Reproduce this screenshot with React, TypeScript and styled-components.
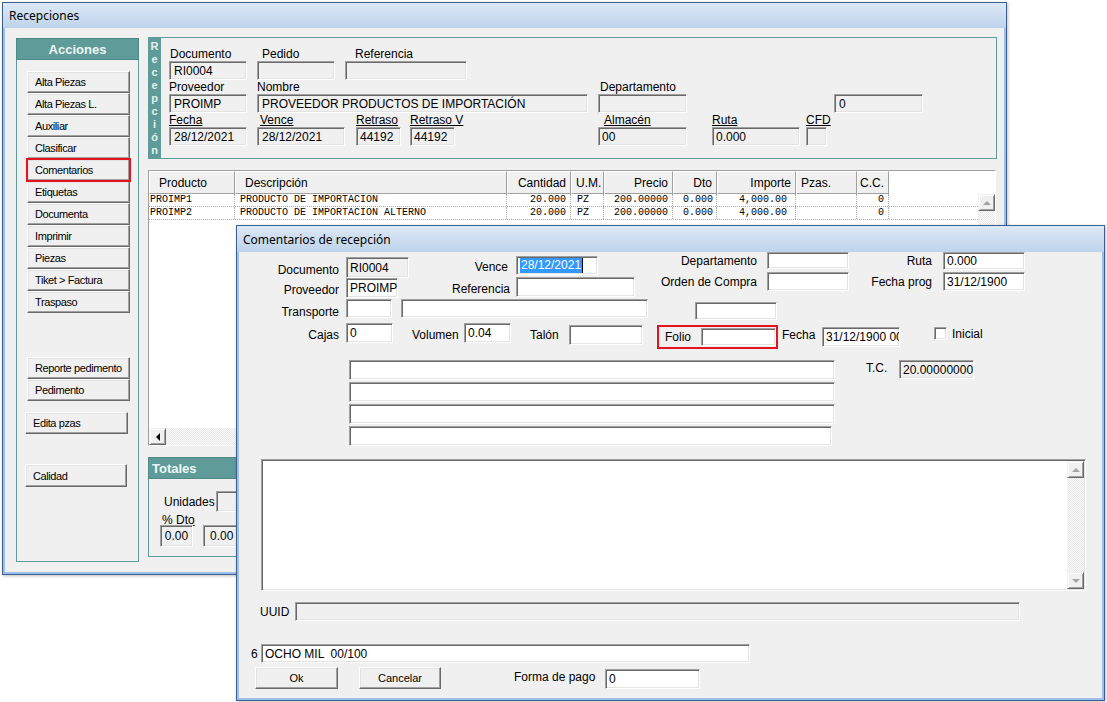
import React from 'react';
import styled, { createGlobalStyle, css } from 'styled-components';

const TEAL = '#5f9b98';

const GlobalStyle = createGlobalStyle`
  html, body {
    margin: 0;
    padding: 0;
    background: #fff;
  }
  body {
    font-family: 'Liberation Sans', Arial, sans-serif;
    font-size: 12px;
    color: #000;
  }
  * {
    box-sizing: border-box;
  }
`;

const Desktop = styled.div`
  position: relative;
  width: 1107px;
  height: 702px;
  overflow: hidden;
  background: #fff;
`;

// ventanas sobre el escritorio
const Win = styled.div<{ $x: number; $y: number; $w: number; $h: number }>`
  position: absolute;
  left: ${p => p.$x}px;
  top: ${p => p.$y}px;
  width: ${p => p.$w}px;
  height: ${p => p.$h}px;
  display: flex;
  flex-direction: column;
  border: 1px solid #3b5f8f;
  background: #9cc0e9;
  padding: 0 2px 2px 2px;
  box-shadow: 1px 1px 3px rgba(0, 0, 0, 0.25);
`;

const TitleBar = styled.div<{ $h: number }>`
  height: ${p => p.$h}px;
  margin: 0 -2px;
  flex-shrink: 0;
  display: flex;
  align-items: center;
  padding-left: 6px;
  background: linear-gradient(#dce8f5, #bed3eb);
  font-family: 'Noto Sans', 'Liberation Sans', sans-serif;
  font-size: 12px;
  color: #000;
`;

const WinBody = styled.div`
  flex: 1;
  background: #f0f0f0;
  display: flex;
  min-height: 0;
`;

const MainBody = styled(WinBody)`
  padding: 10px 0 0 11px;
  align-items: flex-start;
`;

const DialogBody = styled(WinBody)`
  flex-direction: column;
`;

/* ---------- controles comunes ---------- */

const Lbl = styled.div<{
  $w?: number;
  $right?: boolean;
  $lh?: number;
  $mt?: number;
  $ml?: number;
  $u?: boolean;
  $size?: number;
}>`
  flex-shrink: 0;
  ${p => p.$w !== undefined && css`width: ${p.$w}px;`}
  margin-left: ${p => p.$ml ?? 0}px;
  margin-top: ${p => p.$mt ?? 0}px;
  line-height: ${p => p.$lh ?? 16}px;
  text-align: ${p => (p.$right ? 'right' : 'left')};
  font-size: ${p => p.$size ?? 12}px;
  white-space: nowrap;
  text-decoration: ${p => (p.$u ? 'underline' : 'none')};
`;

const Edit = styled.div<{
  $w?: number;
  $h: number;
  $ml?: number;
  $mt?: number;
  $white?: boolean;
  $pl?: number;
  $center?: boolean;
}>`
  flex-shrink: 0;
  width: ${p => (p.$w ? `${p.$w}px` : '100%')};
  height: ${p => p.$h}px;
  margin-left: ${p => p.$ml ?? 0}px;
  margin-top: ${p => p.$mt ?? 0}px;
  padding-left: ${p => p.$pl ?? 3}px;
  background: ${p => (p.$white ? '#fff' : '#f0f0f0')};
  border: 1px solid;
  border-color: #a0a0a0 #fff #fff #a0a0a0;
  box-shadow: inset 1px 1px #696969, inset -1px -1px #e3e3e3;
  display: flex;
  align-items: center;
  justify-content: ${p => (p.$center ? 'center' : 'flex-start')};
  font-size: 12px;
  white-space: pre;
  overflow: hidden;
`;

const Btn = styled.div<{
  $w?: number;
  $h?: number;
  $ml?: number;
  $mt?: number;
  $center?: boolean;
  $marked?: boolean;
}>`
  flex-shrink: 0;
  width: ${p => p.$w ?? 103}px;
  height: ${p => p.$h ?? 22}px;
  margin-left: ${p => p.$ml ?? 0}px;
  margin-top: ${p => p.$mt ?? 0}px;
  background: #f0f0f0;
  border: 1px solid;
  border-color: #fff #696969 #696969 #fff;
  box-shadow: inset -1px -1px #a0a0a0, inset 1px 1px #e3e3e3;
  display: flex;
  align-items: center;
  justify-content: ${p => (p.$center ? 'center' : 'flex-start')};
  padding-left: ${p => (p.$center ? 0 : 7)}px;
  font-size: 11px;
  letter-spacing: ${p => (p.$center ? 0 : -0.4)}px;
  white-space: nowrap;
  ${p =>
    p.$marked &&
    css`
      position: relative;
      z-index: 1;
      outline: 2px solid #e3141f;
      outline-offset: -1px;
    `}
`;

const ScrollBtn = styled.div`
  width: 17px;
  height: 17px;
  flex-shrink: 0;
  background: #f0f0f0;
  border: 1px solid;
  border-color: #f0f0f0 #696969 #696969 #f0f0f0;
  box-shadow: inset 1px 1px #fff, inset -1px -1px #a0a0a0;
  display: flex;
  align-items: center;
  justify-content: center;
`;

const Arrow = styled.span<{ $dir: 'up' | 'down' | 'left'; $dim?: boolean }>`
  width: 0;
  height: 0;
  ${p => {
    const c = p.$dim ? '#a3a3a3' : '#000';
    if (p.$dir === 'up')
      return css`
        border-left: 4px solid transparent;
        border-right: 4px solid transparent;
        border-bottom: 4px solid ${c};
      `;
    if (p.$dir === 'down')
      return css`
        border-left: 4px solid transparent;
        border-right: 4px solid transparent;
        border-top: 4px solid ${c};
      `;
    return css`
      border-top: 4px solid transparent;
      border-bottom: 4px solid transparent;
      border-right: 4px solid ${c};
    `;
  }}
`;

const Track = styled.div`
  flex: 1;
  background: repeating-conic-gradient(#e8e8e8 0 25%, #fbfbfb 0 50%) 0 0 / 2px 2px;
`;

/* ---------- ventana Recepciones ---------- */

const ActionsPanel = styled.div`
  width: 123px;
  height: 524px;
  margin-top: 0;
  display: flex;
  flex-direction: column;
  flex-shrink: 0;
`;

const PanelHead = styled.div<{ $center?: boolean }>`
  height: 22px;
  flex-shrink: 0;
  background: ${TEAL};
  border: 1px solid #4e8986;
  color: #eef6f5;
  font-weight: bold;
  font-size: 13px;
  display: flex;
  align-items: center;
  justify-content: ${p => (p.$center ? 'center' : 'flex-start')};
  padding-left: ${p => (p.$center ? 0 : 3)}px;
`;

const PanelBody = styled.div`
  flex: 1;
  border: 1px solid ${TEAL};
  border-top: none;
  display: flex;
  flex-direction: column;
  align-items: flex-start;
  padding: 11px 0 0 10px;
`;

const RightCol = styled.div`
  width: 849px;
  margin: -1px 0 0 9px;
  display: flex;
  flex-direction: column;
`;

const Group = styled.div`
  height: 122px;
  display: flex;
  border: 1px solid ${TEAL};
`;

const Strip = styled.div`
  width: 13px;
  margin: -1px 0 -1px -1px;
  background: ${TEAL};
  display: flex;
  flex-direction: column;
  align-items: center;
  justify-content: center;
  color: #e3f1f0;
  font-weight: bold;
  font-size: 11px;
  line-height: 13px;
`;

const GroupFields = styled.div`
  display: flex;
  flex-direction: column;
  padding: 9px 0 0 8px;
`;

const FieldRow = styled.div`
  display: flex;
  align-items: flex-end;
`;

const Stack = styled.div<{ $w: number; $ml?: number }>`
  width: ${p => p.$w}px;
  margin-left: ${p => p.$ml ?? 0}px;
  display: flex;
  flex-direction: column;
  flex-shrink: 0;
`;

const StackLabel = styled.div<{ $pl?: number; $u?: boolean }>`
  height: 14px;
  line-height: 14px;
  padding-left: ${p => p.$pl ?? 1}px;
  font-size: 12px;
  white-space: nowrap;
  text-decoration: ${p => (p.$u ? 'underline' : 'none')};
`;

const GridBox = styled.div`
  margin-top: 11px;
  width: 848px;
  height: 276px;
  border: 1px solid;
  border-color: #a0a0a0 #fff #fff #a0a0a0;
  background: #fff;
  display: flex;
  flex-direction: column;
`;

const HeadRow = styled.div`
  height: 23px;
  flex-shrink: 0;
  display: flex;
`;

const HeadCell = styled.div<{ $w: number; $right?: boolean; $pad: number }>`
  width: ${p => p.$w}px;
  flex-shrink: 0;
  background: #f0f0f0;
  border: 1px solid;
  border-color: #fff #a0a0a0 #a0a0a0 #fff;
  display: flex;
  align-items: center;
  justify-content: ${p => (p.$right ? 'flex-end' : 'flex-start')};
  padding: ${p => (p.$right ? `0 ${p.$pad}px 0 0` : `0 0 0 ${p.$pad}px`)};
  font-size: 12px;
  white-space: nowrap;
`;

const GridMid = styled.div`
  flex: 1;
  display: flex;
  min-height: 0;
`;

const RowsArea = styled.div`
  flex: 1;
  display: flex;
  flex-direction: column;
`;

const DataRow = styled.div`
  height: 13px;
  display: flex;
  border-bottom: 1px dotted #a8a8a8;
`;

const DataCell = styled.div<{ $w?: number; $right?: boolean; $pad?: number }>`
  ${p => (p.$w ? css`width: ${p.$w}px; flex-shrink: 0;` : css`flex: 1;`)}
  border-right: ${p => (p.$w ? '1px dotted #a8a8a8' : 'none')};
  font-family: 'Liberation Mono', 'Courier New', monospace;
  font-size: 10px;
  line-height: 12px;
  text-align: ${p => (p.$right ? 'right' : 'left')};
  padding: ${p => (p.$right ? `0 ${p.$pad ?? 0}px 0 0` : `0 0 0 ${p.$pad ?? 0}px`)};
  white-space: pre;
  overflow: hidden;
`;

const VScroll = styled.div`
  width: 17px;
  display: flex;
  flex-direction: column;
`;

const HScroll = styled.div`
  height: 17px;
  flex-shrink: 0;
  display: flex;
`;

const Totals = styled.div`
  margin-top: 11px;
  height: 100px;
  display: flex;
  flex-direction: column;
`;

const TotalsBody = styled.div`
  flex: 1;
  border: 1px solid ${TEAL};
  border-top: none;
  display: flex;
  flex-direction: column;
  padding: 12px 0 0 15px;
`;

const InlineRow = styled.div<{ $mt?: number; $align?: string; $pl?: number }>`
  display: flex;
  align-items: ${p => p.$align ?? 'flex-start'};
  margin-top: ${p => p.$mt ?? 0}px;
  padding-left: ${p => p.$pl ?? 0}px;
`;

/* ---------- diálogo ---------- */

const TopBlock = styled.div`
  height: 46px;
  display: flex;
  flex-shrink: 0;
`;

const Col = styled.div<{ $w: number; $pt: number; $gap: number }>`
  width: ${p => p.$w}px;
  flex-shrink: 0;
  padding-top: ${p => p.$pt}px;
  display: flex;
  flex-direction: column;
  gap: ${p => p.$gap}px;
`;

const FormRow = styled.div<{ $align?: string }>`
  display: flex;
  align-items: ${p => p.$align ?? 'flex-end'};
`;

const Sel = styled.span`
  background: #3399ff;
  color: #fff;
  line-height: 15px;
  padding: 0 1px;
`;

const Caret = styled.span`
  width: 1px;
  height: 15px;
  background: #000;
`;

const FolioBox = styled.div`
  width: 121px;
  height: 24px;
  margin: 2px 0 0 14px;
  border: 2px solid #e3141f;
  display: flex;
  align-items: center;
  padding-left: 6px;
  flex-shrink: 0;
`;

const Check = styled.div`
  width: 13px;
  height: 13px;
  margin: 4px 0 0 34px;
  flex-shrink: 0;
  background: #fff;
  border: 1px solid;
  border-color: #a0a0a0 #fff #fff #a0a0a0;
  box-shadow: inset 1px 1px #696969, inset -1px -1px #e3e3e3;
`;

const LinesBlock = styled.div`
  margin-top: 11px;
  padding-left: 110px;
  display: flex;
  align-items: flex-start;
`;

const LinesCol = styled.div`
  display: flex;
  flex-direction: column;
  gap: 2px;
`;

const Memo = styled.div`
  margin: 13px 0 0 22px;
  width: 825px;
  height: 132px;
  flex-shrink: 0;
  background: #fff;
  border: 1px solid;
  border-color: #a0a0a0 #fff #fff #a0a0a0;
  box-shadow: inset 1px 1px #696969, inset -1px -1px #e3e3e3;
  display: flex;
  justify-content: flex-end;
  padding: 1px;
`;

const MemoScroll = styled.div`
  width: 17px;
  display: flex;
  flex-direction: column;
`;

/* ---------- datos ---------- */

const actions = [
  'Alta Piezas',
  'Alta Piezas L.',
  'Auxiliar',
  'Clasificar',
  'Comentarios',
  'Etiquetas',
  'Documenta',
  'Imprimir',
  'Piezas',
  'Tiket > Factura',
  'Traspaso',
];

const cols = [
  { name: 'Producto', w: 86, right: false, hp: 9, dp: 1 },
  { name: 'Descripción', w: 272, right: false, hp: 9, dp: 5 },
  { name: 'Cantidad', w: 64, right: true, hp: 4, dp: 4 },
  { name: 'U.M.', w: 33, right: false, hp: 4, dp: 6 },
  { name: 'Precio', w: 69, right: true, hp: 4, dp: 4 },
  { name: 'Dto', w: 44, right: true, hp: 4, dp: 3 },
  { name: 'Importe', w: 79, right: true, hp: 4, dp: 8 },
  { name: 'Pzas.', w: 61, right: false, hp: 4, dp: 4 },
  { name: 'C.C.', w: 32, right: true, hp: 4, dp: 4 },
];

const rows = [
  ['PROIMP1', 'PRODUCTO DE IMPORTACIÓN', '20.000', 'PZ', '200.00000', '0.000', '4,000.00', '', '0'],
  ['PROIMP2', 'PRODUCTO DE IMPORTACIÓN ALTERNO', '20.000', 'PZ', '200.00000', '0.000', '4,000.00', '', '0'],
];

const App = () => {
  return (
    <>
      <GlobalStyle />
      <Desktop>
        <Win $x={2} $y={2} $w={1005} $h={573}>
          <TitleBar $h={25}>Recepciones</TitleBar>
          <MainBody>
            <ActionsPanel>
              <PanelHead $center>Acciones</PanelHead>
              <PanelBody>
                {actions.map(a => (
                  <Btn key={a} $marked={a === 'Comentarios'}>
                    {a}
                  </Btn>
                ))}
                <Btn $mt={44}>Reporte pedimento</Btn>
                <Btn>Pedimento</Btn>
                <Btn $mt={11} $ml={-2}>Edita pzas</Btn>
                <Btn $mt={30} $ml={-2} $w={102} $h={23}>Calidad</Btn>
              </PanelBody>
            </ActionsPanel>

            <RightCol>
              <Group>
                <Strip>
                  {'Recepción'.split('').map((ch, i) => (
                    <span key={i}>{ch}</span>
                  ))}
                </Strip>
                <GroupFields>
                  <FieldRow>
                    <Stack $w={78}>
                      <StackLabel>Documento</StackLabel>
                      <Edit $h={19} $pl={4}>RI0004</Edit>
                    </Stack>
                    <Stack $w={78} $ml={10}>
                      <StackLabel $pl={5}>Pedido</StackLabel>
                      <Edit $h={19} />
                    </Stack>
                    <Stack $w={122} $ml={10}>
                      <StackLabel $pl={10}>Referencia</StackLabel>
                      <Edit $h={19} />
                    </Stack>
                  </FieldRow>
                  <FieldRow>
                    <Stack $w={78}>
                      <StackLabel $pl={0}>Proveedor</StackLabel>
                      <Edit $h={19} $pl={4}>PROIMP</Edit>
                    </Stack>
                    <Stack $w={331} $ml={10}>
                      <StackLabel $pl={0}>Nombre</StackLabel>
                      <Edit $h={19} $pl={4}>PROVEEDOR PRODUCTOS DE IMPORTACIÓN</Edit>
                    </Stack>
                    <Stack $w={89} $ml={10}>
                      <StackLabel $pl={2}>Departamento</StackLabel>
                      <Edit $h={19} />
                    </Stack>
                    <Stack $w={89} $ml={147}>
                      <StackLabel />
                      <Edit $h={19} $pl={4}>0</Edit>
                    </Stack>
                  </FieldRow>
                  <FieldRow>
                    <Stack $w={78}>
                      <StackLabel $pl={0} $u>Fecha</StackLabel>
                      <Edit $h={19} $pl={4}>28/12/2021</Edit>
                    </Stack>
                    <Stack $w={88} $ml={10}>
                      <StackLabel $pl={3} $u>Vence</StackLabel>
                      <Edit $h={19} $pl={4}>28/12/2021</Edit>
                    </Stack>
                    <Stack $w={45} $ml={11}>
                      <StackLabel $pl={0} $u>Retraso</StackLabel>
                      <Edit $h={19}>44192</Edit>
                    </Stack>
                    <Stack $w={45} $ml={9}>
                      <StackLabel $pl={0} $u>Retraso V</StackLabel>
                      <Edit $h={19}>44192</Edit>
                    </Stack>
                    <Stack $w={89} $ml={143}>
                      <StackLabel $pl={6} $u>Almacén</StackLabel>
                      <Edit $h={19}>00</Edit>
                    </Stack>
                    <Stack $w={88} $ml={25}>
                      <StackLabel $pl={0} $u>Ruta</StackLabel>
                      <Edit $h={19}>0.000</Edit>
                    </Stack>
                    <Stack $w={21} $ml={6}>
                      <StackLabel $pl={0} $u>CFD</StackLabel>
                      <Edit $h={19} />
                    </Stack>
                  </FieldRow>
                </GroupFields>
              </Group>

              <GridBox>
                <HeadRow>
                  {cols.map(c => (
                    <HeadCell key={c.name} $w={c.w} $right={c.right} $pad={c.hp}>
                      {c.name}
                    </HeadCell>
                  ))}
                </HeadRow>
                <GridMid>
                  <RowsArea>
                    {rows.map((r, i) => (
                      <DataRow key={i}>
                        {r.map((v, j) => (
                          <DataCell key={j} $w={cols[j].w} $right={cols[j].right} $pad={cols[j].dp}>
                            {v}
                          </DataCell>
                        ))}
                        <DataCell />
                      </DataRow>
                    ))}
                  </RowsArea>
                  <VScroll>
                    <ScrollBtn>
                      <Arrow $dir="up" $dim />
                    </ScrollBtn>
                    <Track />
                  </VScroll>
                </GridMid>
                <HScroll>
                  <ScrollBtn>
                    <Arrow $dir="left" />
                  </ScrollBtn>
                  <Track />
                </HScroll>
              </GridBox>

              <Totals>
                <PanelHead>Totales</PanelHead>
                <TotalsBody>
                  <InlineRow $align="center">
                    <Lbl>Unidades</Lbl>
                    <Edit $w={80} $h={21} $ml={1} />
                  </InlineRow>
                  <Lbl $ml={-2} $mt={3} $lh={10} $u>
                    % Dto
                  </Lbl>
                  <InlineRow $pl={0}>
                    <Edit $w={33} $h={22} $ml={-4} $center $pl={0}>0.00</Edit>
                    <Edit $w={40} $h={22} $ml={10} $pl={6}>0.00</Edit>
                  </InlineRow>
                </TotalsBody>
              </Totals>
            </RightCol>
          </MainBody>
        </Win>

        <Win $x={236} $y={225} $w={869} $h={476}>
          <TitleBar $h={26}>Comentarios de recepción</TitleBar>
          <DialogBody>
            <TopBlock>
              <Col $w={170} $pt={5} $gap={0}>
                <FormRow>
                  <Lbl $w={100} $right>Documento</Lbl>
                  <Edit $w={63} $h={21} $ml={7}>RI0004</Edit>
                </FormRow>
                <FormRow>
                  <Lbl $w={100} $right>Proveedor</Lbl>
                  <Edit $w={52} $h={20} $ml={7} $white>PROIMP</Edit>
                </FormRow>
              </Col>
              <Col $w={225} $pt={4} $gap={2}>
                <FormRow>
                  <Lbl $w={99} $right>Vence</Lbl>
                  <Edit $w={82} $h={19} $ml={8} $white>
                    <Sel>28/12/2021</Sel>
                    <Caret />
                  </Edit>
                </FormRow>
                <FormRow>
                  <Lbl $w={101} $right>Referencia</Lbl>
                  <Edit $w={119} $h={20} $ml={6} $white />
                </FormRow>
              </Col>
              <Col $w={215} $pt={0} $gap={3}>
                <FormRow $align="center">
                  <Lbl $w={123} $right>Departamento</Lbl>
                  <Edit $w={82} $h={17} $ml={10} $white />
                </FormRow>
                <FormRow $align="center">
                  <Lbl $w={123} $right>Orden de Compra</Lbl>
                  <Edit $w={82} $h={19} $ml={10} $white />
                </FormRow>
              </Col>
              <Col $w={176} $pt={0} $gap={2}>
                <FormRow $align="center">
                  <Lbl $w={83} $right>Ruta</Lbl>
                  <Edit $w={82} $h={18} $ml={11} $white>0.000</Edit>
                </FormRow>
                <FormRow $align="center">
                  <Lbl $w={83} $right>Fecha prog</Lbl>
                  <Edit $w={82} $h={19} $ml={11} $white>31/12/1900</Edit>
                </FormRow>
              </Col>
            </TopBlock>

            <InlineRow $mt={1}>
              <Lbl $w={100} $right $mt={5}>Transporte</Lbl>
              <Edit $w={46} $h={19} $ml={7} $white />
              <Edit $w={247} $h={19} $ml={9} $white />
              <Edit $w={82} $h={18} $ml={47} $mt={3} $white />
            </InlineRow>

            <InlineRow $mt={3}>
              <Lbl $w={100} $right $mt={4}>Cajas</Lbl>
              <Edit $w={47} $h={20} $ml={7} $white>0</Edit>
              <Lbl $w={52} $ml={19} $mt={4}>Volumen</Lbl>
              <Edit $w={47} $h={20} $white>0.04</Edit>
              <Lbl $w={39} $ml={19} $mt={4}>Talón</Lbl>
              <Edit $w={74} $h={20} $mt={2} $white />
              <FolioBox>
                <Lbl $w={36}>Folio</Lbl>
                <Edit $w={75} $h={18} $white />
              </FolioBox>
              <Lbl $w={40} $ml={4} $mt={4}>Fecha</Lbl>
              <Edit $w={78} $h={20} $mt={4} $white>31/12/1900 00:00</Edit>
              <Check />
              <Lbl $ml={5} $mt={3}>Inicial</Lbl>
            </InlineRow>

            <LinesBlock>
              <LinesCol>
                <Edit $w={486} $h={20} $white />
                <Edit $w={486} $h={20} $white />
                <Edit $w={486} $h={20} $white />
                <Edit $w={483} $h={20} $white />
              </LinesCol>
              <Lbl $w={33} $ml={31}>T.C.</Lbl>
              <Edit $w={75} $h={19}>20.00000000</Edit>
            </LinesBlock>

            <Memo>
              <MemoScroll>
                <ScrollBtn>
                  <Arrow $dir="up" $dim />
                </ScrollBtn>
                <Track />
                <ScrollBtn>
                  <Arrow $dir="down" $dim />
                </ScrollBtn>
              </MemoScroll>
            </Memo>

            <InlineRow $mt={11} $align="center">
              <Lbl $w={35} $ml={21}>UUID</Lbl>
              <Edit $w={725} $h={19} />
            </InlineRow>

            <InlineRow $mt={23} $align="center">
              <Lbl $w={10} $ml={12}>6</Lbl>
              <Edit $w={489} $h={19} $white>OCHO MIL  00/100</Edit>
            </InlineRow>

            <InlineRow $mt={4}>
              <Btn $w={83} $ml={16} $center>Ok</Btn>
              <Btn $w={82} $ml={21} $center>Cancelar</Btn>
              <Lbl $w={91} $ml={73} $mt={2}>Forma de pago</Lbl>
              <Edit $w={95} $h={20} $mt={2} $white>0</Edit>
            </InlineRow>
          </DialogBody>
        </Win>
      </Desktop>
    </>
  );
};

export default App;
